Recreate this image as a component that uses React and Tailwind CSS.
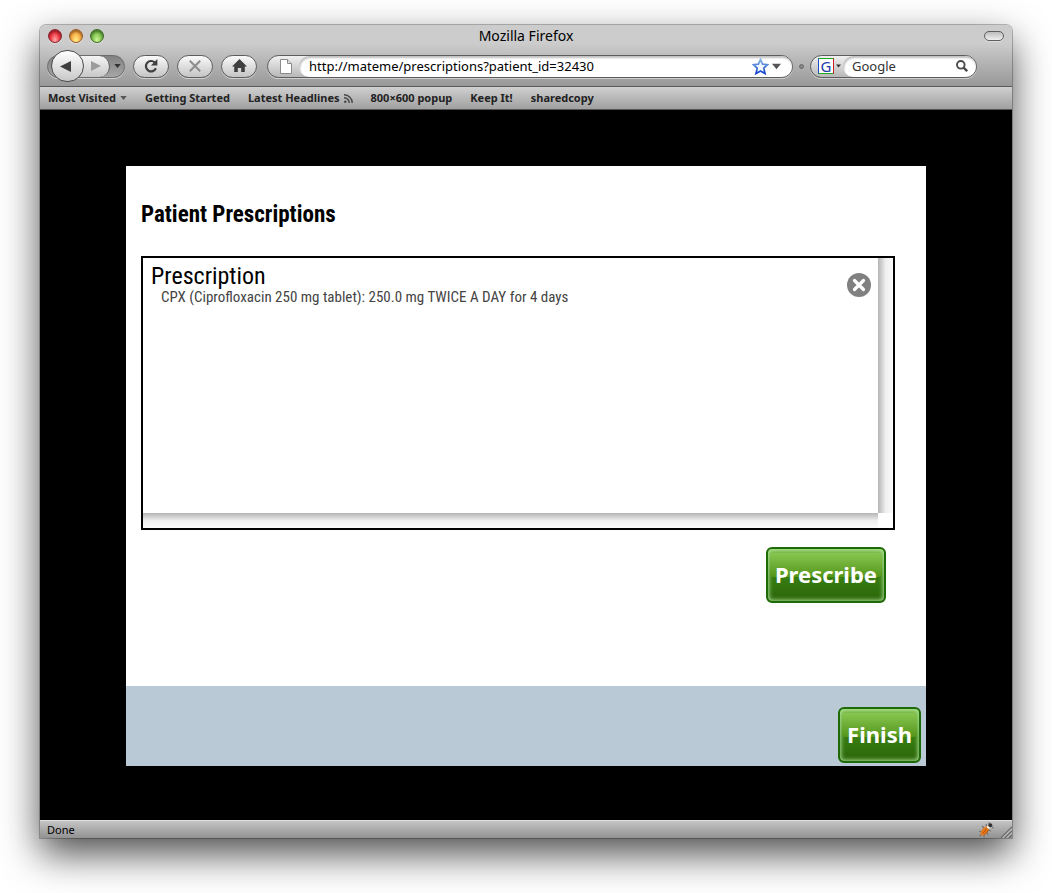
import React from "react";

const chrome = "font-['Noto_Sans',sans-serif]";
const pill =
  "flex h-[23px] w-9 items-center justify-center rounded-full border border-[#5c5c5c] bg-linear-to-b from-[#fafafa] to-[#c4c4c4] shadow-[0_1px_0_#cfcfcf]";

function Light({ label, tone }) {
  return (
    <button
      aria-label={label}
      className={`h-3.5 w-3.5 rounded-full border shadow-[inset_0_2px_2px_rgba(0,0,0,0.35),0_1px_0_#dedede] ${tone}`}
    />
  );
}

function Caret({ className }) {
  return (
    <svg viewBox="0 0 8 5" className={className} aria-hidden="true">
      <path d="M0 0h8L4 5z" fill="currentColor" />
    </svg>
  );
}

function TitleBar() {
  return (
    <div className="grid h-[22px] grid-cols-[1fr_auto_1fr] items-center pr-2 pl-2">
      <div className="flex gap-[7px]">
        <Light label="Close" tone="border-[#8a2530] bg-radial-[at_50%_85%] from-[#ffb0b0] via-[#ef3b45] to-[#c01425]" />
        <Light label="Minimize" tone="border-[#9a5a28] bg-radial-[at_50%_85%] from-[#fff08a] via-[#f7b04a] to-[#d97c22]" />
        <Light label="Zoom" tone="border-[#3c6a22] bg-radial-[at_50%_85%] from-[#d2f59a] via-[#83c551] to-[#4c9a2c]" />
      </div>
      <div className="text-[14px] leading-5 text-black">Mozilla Firefox</div>
      <button
        aria-label="Toggle toolbar"
        className="h-2.5 w-5 justify-self-end rounded-full border border-[#5e5e5e] bg-linear-to-b from-[#bdbdbd] to-[#f0f0f0] shadow-[0_1px_0_#dedede]"
      />
    </div>
  );
}

function NavBar() {
  return (
    <div className="flex h-[38px] items-center pr-[35px] pl-[7px]">
      <div className="mr-2 flex h-[23px] items-center rounded-full border border-[#6c6c6c] bg-linear-to-b from-[#828282] to-[#a6a6a6] pl-[3px] shadow-[0_1px_0_#cfcfcf]">
        <button
          aria-label="Back"
          className="z-10 flex h-8 w-[33px] items-center justify-center rounded-full border border-[#4c4c4c] bg-linear-to-b from-[#ffffff] to-[#c8c8c8]"
        >
          <svg viewBox="0 0 11 11" className="mr-1 h-[11px] w-[11px]" aria-hidden="true">
            <path d="M0 5.5L11 0v11z" fill="#3f3f3f" />
          </svg>
        </button>
        <button
          aria-label="Forward"
          className="-ml-2 flex h-[21px] w-[34px] items-center justify-end rounded-r-full border-r border-[#5c5c5c] bg-linear-to-b from-[#f4f4f4] to-[#c8c8c8] pr-2"
        >
          <svg viewBox="0 0 10 10" className="h-2.5 w-2.5" aria-hidden="true">
            <path d="M10 5L0 0v10z" fill="#9b9b9b" />
          </svg>
        </button>
        <button aria-label="Recent pages" className="flex w-3.5 justify-center text-[#333]">
          <Caret className="h-1 w-[7px]" />
        </button>
      </div>
      <div className="mr-2.5 flex gap-2">
        <button aria-label="Reload" className={pill}>
          <svg viewBox="0 0 16 16" className="h-4 w-4" aria-hidden="true">
            <path d="M11.6 4.300A5.200 5.200 0 1 0 12.900 10.300" fill="none" stroke="#3f3f3f" strokeWidth="2.200" />
            <path d="M14.400 1v6.600H7.900z" fill="#3f3f3f" />
          </svg>
        </button>
        <button aria-label="Stop" className={pill}>
          <svg viewBox="0 0 12 12" className="h-3 w-3" aria-hidden="true">
            <path d="M.8 .8l10.400 10.400M11.200 .8L.8 11.200" stroke="#8c8c8c" strokeWidth="2" />
          </svg>
        </button>
        <button aria-label="Home" className={pill}>
          <svg viewBox="0 0 15 14" className="h-3.5 w-[15px]" aria-hidden="true">
            <path d="M7.5 0L15 7.4h-2.2V13H9.2V9H5.8v4H2.2V7.4H0z" fill="#3f3f3f" />
          </svg>
        </button>
      </div>
      <div className="flex h-[23px] min-w-0 flex-1 items-center rounded-full border border-[#5c5c5c] bg-linear-to-b from-[#f0f0f0] to-[#b8b8b8] shadow-[0_1px_0_#cfcfcf]">
        <svg viewBox="0 0 12 15" className="mr-[7px] ml-3 h-[15px] w-3" aria-hidden="true">
          <path d="M.5.5h7l4 4v10H.5z" fill="#fff" stroke="#8a8a8a" />
          <path d="M7.5.5v4h4" fill="#ddd" stroke="#8a8a8a" />
        </svg>
        <div className="flex h-[21px] min-w-0 flex-1 items-center rounded-full bg-white pr-[11px] pl-2.5 shadow-[inset_1px_2px_2px_rgba(0,0,0,0.25)]">
          <input
            aria-label="Address"
            defaultValue="http://mateme/prescriptions?patient_id=32430"
            className="min-w-0 flex-1 bg-transparent text-[13px] leading-5 text-black outline-none"
          />
          <button aria-label="Bookmark this page">
            <svg viewBox="0 0 17 17" className="h-[17px] w-[17px]" aria-hidden="true">
              <defs>
                <linearGradient id="star" x1="0" y1="0" x2="0" y2="1">
                  <stop offset="0" stopColor="#84b4e4" />
                  <stop offset="1" stopColor="#1440cc" />
                </linearGradient>
              </defs>
              <path
                d="M8.5 1.4l2.1 4.7 5 .5-3.8 3.5 1.2 5.4-4.5-2.6L4 15.500l1.200-5.400L1.400 6.600l5-.5z"
                fill="#f4f9ff"
                stroke="url(#star)"
                strokeWidth="1.700"
              />
            </svg>
          </button>
          <button aria-label="Show history" className="ml-[3px] text-[#555]">
            <Caret className="h-[7px] w-[9px]" />
          </button>
        </div>
      </div>
      <div className="mx-1.5 h-[5px] w-[5px] rounded-full border border-[#6a6a6a] bg-[#888]" />
      <div className="flex h-[23px] w-[167px] items-center rounded-full border border-[#5c5c5c] bg-linear-to-b from-[#f0f0f0] to-[#b8b8b8] shadow-[0_1px_0_#cfcfcf]">
        <button aria-label="Choose search engine" className="ml-[7px] flex items-center text-[#333]">
          <span className="flex h-4 w-4 items-center justify-center border border-t-[#1fa81f] border-r-[#c8201c] border-b-[#1fa81f] border-l-[#1c4cc8] bg-white text-[15px] leading-[14px] text-[#1a3ba8]">
            G
          </span>
          <Caret className="mr-0.5 ml-0.5 h-1 w-[5px]" />
        </button>
        <div className="flex h-[21px] min-w-0 flex-1 items-center rounded-full bg-white pr-2 pl-[9px] shadow-[inset_1px_2px_2px_rgba(0,0,0,0.25)]">
          <input
            aria-label="Search"
            defaultValue="Google"
            className="min-w-0 flex-1 bg-transparent text-[13px] leading-5 text-[#333] outline-none"
          />
          <button aria-label="Search the web">
            <svg viewBox="0 0 12 12" className="h-3 w-3" aria-hidden="true">
              <circle cx="4.800" cy="4.800" r="3.800" fill="none" stroke="#4a4a4a" strokeWidth="1.900" />
              <path d="M7.600 7.600L11.200 11.200" stroke="#4a4a4a" strokeWidth="2.400" />
            </svg>
          </button>
        </div>
      </div>
    </div>
  );
}

function Bookmarks() {
  return (
    <nav className="flex h-6 items-center gap-[18px] border-t border-b border-t-[#5a5a5a] border-b-[#555] bg-linear-to-b from-[#d0d0d0] to-[#a0a0a0] px-2 text-[11px] leading-4 font-bold text-[#222]">
      <a href="#visited" className="flex items-center gap-1">
        Most Visited
        <Caret className="h-1 w-[7px] text-[#555]" />
      </a>
      <a href="#started">Getting Started</a>
      <a href="#headlines" className="flex items-center gap-1">
        Latest Headlines
        <svg viewBox="0 0 9 9" className="h-[9px] w-[9px]" aria-hidden="true">
          <circle cx="1.300" cy="7.700" r="1.200" fill="#444" />
          <path d="M0 3.800A5 5 0 0 1 5.200 9M0 .8A8 8 0 0 1 8.200 9" fill="none" stroke="#444" strokeWidth="1.400" />
        </svg>
      </a>
      <a href="#popup">800×600 popup</a>
      <a href="#keepit">Keep It!</a>
      <a href="#sharedcopy">sharedcopy</a>
    </nav>
  );
}

function GreenButton({ children }) {
  return (
    <button className="grid h-14 rounded-md border-2 border-[#1f6a08] bg-linear-to-b from-[#7fbd4e] via-[#377d12] via-55% to-[#2c650a] text-[22px] leading-7 font-bold text-white shadow-[inset_0_0_4px_1px_rgba(190,245,170,0.85)]">
      <span className="col-start-1 row-start-1 mx-0.5 mt-1 mb-6 rounded-sm bg-linear-to-b from-[#88c650] to-[#549618]" />
      <span className="col-start-1 row-start-1 self-center px-[7px] pb-0.5">{children}</span>
    </button>
  );
}

function BugIcon() {
  return (
    <svg viewBox="0 0 16 16" className="h-4 w-4" aria-hidden="true">
      <path
        d="M4 4l3 3M1 9l3 1M1.500 14l2.500-2M6 15.500l0-3M10 13l-1-3M13 9l-3-1M8 2l1 3M14 5.500l1.500 0M11 2l0-1.500"
        stroke="#77736e"
        strokeWidth="1.300"
      />
      <ellipse cx="6.800" cy="9" rx="3" ry="5.400" transform="rotate(42 6.800 9)" fill="#e87a1c" />
      <path d="M4.500 11.500L9.500 6M6.500 12.500L10.500 8" stroke="#8c430c" strokeWidth=".7" />
      <circle cx="10.500" cy="5" r="1.800" fill="#f4ece0" />
      <circle cx="12.300" cy="3.300" r="2" fill="#333" />
    </svg>
  );
}

export default function App() {
  return (
    <div className={`min-h-screen bg-white px-10 pt-[25px] pb-[55px] ${chrome}`}>
      <div className="rounded-t-md bg-linear-to-b from-[#c9c9c9] to-[#969696] shadow-[0_0_0_1px_rgba(0,0,0,0.25),0_16px_38px_rgba(0,0,0,0.7)]">
        <header className="rounded-t-md bg-linear-to-b from-[#cccccc] from-30% to-[#989898] pb-px">
          <TitleBar />
          <NavBar />
        </header>
        <Bookmarks />
        <main className="bg-black pt-14 pb-[54px] font-['Roboto_Condensed','Liberation_Sans',sans-serif]">
          <div className="mx-auto max-w-[800px] bg-white">
            <section className="pt-[34px] pr-[31px] pb-[83px] pl-[15px]">
              <h1 className="text-[23px] leading-[30px] font-bold text-black">Patient Prescriptions</h1>
              <div className="mt-[26px] grid grid-cols-[1fr_15px] grid-rows-[auto_15px] border-2 border-black">
                <div className="flex min-h-[255px] items-start justify-between pr-[7px] pl-2">
                  <div className="pt-1">
                    <h2 className="text-2xl leading-7 text-black">Prescription</h2>
                    <p className="pl-2.5 text-[15px] leading-3.5 text-[#444]">
                      CPX (Ciprofloxacin 250 mg tablet): 250.0 mg TWICE A DAY for 4 days
                    </p>
                  </div>
                  <button aria-label="Remove prescription" className="mt-[15px]">
                    <svg viewBox="0 0 24 24" className="h-6 w-6" aria-hidden="true">
                      <circle cx="12" cy="12" r="12" fill="#808080" />
                      <path d="M7.500 7.500l9 9M16.500 7.500l-9 9" stroke="#fff" strokeWidth="3.200" strokeLinecap="round" />
                    </svg>
                  </button>
                </div>
                <div className="bg-linear-to-r from-[#b4b4b4] via-[#eeeeee] to-[#fbfbfb]" />
                <div className="bg-linear-to-b from-[#b4b4b4] via-[#eeeeee] to-[#fbfbfb]" />
              </div>
              <div className={`mt-[17px] flex justify-end pr-[9px] ${chrome}`}>
                <GreenButton>Prescribe</GreenButton>
              </div>
            </section>
            <footer className={`flex h-20 items-end justify-end bg-[#b9cad6] pr-[5px] pb-[3px] ${chrome}`}>
              <GreenButton>Finish</GreenButton>
            </footer>
          </div>
        </main>
        <div className="flex h-[18px] items-center justify-between border-t border-[#e0e0e0] bg-linear-to-b from-[#c4c4c4] to-[#929292] pl-[7px] text-[11px] leading-4 text-black">
          <span>Done</span>
          <span className="flex items-end gap-1.5">
            <BugIcon />
            <svg viewBox="0 0 12 12" className="h-3 w-3" aria-hidden="true">
              <path d="M1 12L12 1M5 12l7-7M9 12l3-3" stroke="#666" strokeWidth="1.300" />
              <path d="M2.500 12L12 2.500M6.500 12L12 6.500" stroke="#ddd" strokeWidth=".8" />
            </svg>
          </span>
        </div>
      </div>
    </div>
  );
}
